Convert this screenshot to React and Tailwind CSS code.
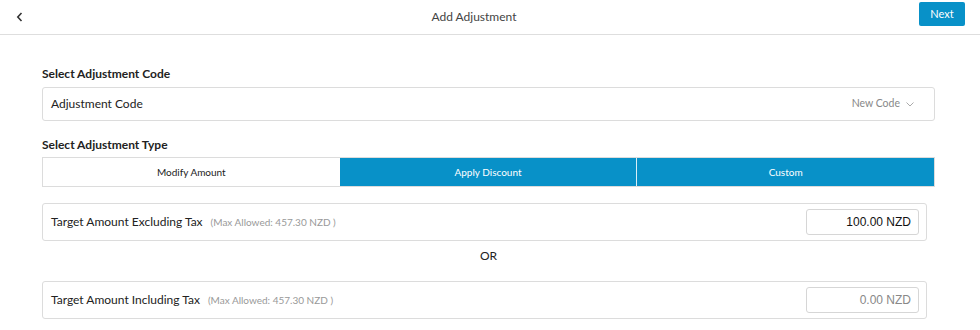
import { useState } from "react";

const font = "font-['Lato','Liberation_Sans',sans-serif]";

function AmountRow({ label, value, muted }) {
  return (
    <div className="mr-[8px] flex h-[38px] items-center justify-between rounded-[3px] border border-[#dcdcdc] pl-[8px] pr-[7px]">
      <div className="flex items-baseline">
        <span className="text-[12px] text-[#222]">{label}</span>
        <span className="ml-[8px] text-[10px] text-[#999]">(Max Allowed: 457.30 NZD )</span>
      </div>
      <div
        className={`flex h-[26px] w-[113px] items-center justify-end rounded-[3px] border border-[#d6d6d6] pr-[7px] font-['Liberation_Sans',Arial,sans-serif] text-[12px] ${
          muted ? "text-[#888]" : "text-[#111]"
        }`}
      >
        {value}
      </div>
    </div>
  );
}

export default function App() {
  const [type, setType] = useState("Apply Discount");
  const types = ["Modify Amount", "Apply Discount", "Custom"];

  return (
    <div className={`${font} h-[330px] w-[980px] overflow-hidden bg-white text-[#333]`}>
      <div className="flex h-[35px] items-center border-b border-[#dedede]">
        <div className="flex w-[40px] items-center pl-[16px]">
          <svg width="8" height="10" viewBox="0 0 8 10" fill="none">
            <path d="M5.5 1 L1.8 5 L5.5 9" stroke="#333" strokeWidth="1.6" />
          </svg>
        </div>
        <div className="flex-1 text-center text-[12px] text-[#444]">Add Adjustment</div>
        <div className="flex w-[72px] justify-end pr-[15px]">
          <button className="mt-[-6px] h-[24px] w-[46px] rounded-[2px] bg-[#0891c8] text-[11px] text-white">
            Next
          </button>
        </div>
      </div>

      <div className="pl-[42px] pr-[45px] pt-[31px]">
        <div className="mb-[5px] h-[16px] text-[12px] font-bold leading-[16px] text-[#222]">
          Select Adjustment Code
        </div>
        <div className="flex h-[34px] items-center justify-between rounded-[3px] border border-[#dcdcdc] pl-[8px] pr-[20px]">
          <span className="text-[12px] text-[#222]">Adjustment Code</span>
          <span className="flex items-center text-[10.5px] text-[#888]">
            New Code
            <svg className="ml-[6px]" width="8" height="5" viewBox="0 0 8 5" fill="none">
              <path d="M0.5 0.5 L4 4 L7.5 0.5" stroke="#aaa" strokeWidth="1" />
            </svg>
          </span>
        </div>

        <div className="mb-[4px] mt-[16px] h-[16px] text-[12px] font-bold leading-[16px] text-[#222]">
          Select Adjustment Type
        </div>
        <div className="flex h-[30px] border border-[#dcdcdc]">
          {types.map((t, i) => {
            const active = t !== "Modify Amount";
            return (
              <button
                key={t}
                onClick={() => setType(t)}
                className={`flex flex-1 items-center justify-center text-[10px] ${
                  active ? "bg-[#0891c8] text-white" : "bg-white text-[#222]"
                } ${i === 2 ? "border-l border-[#d8eef7]" : ""}`}
              >
                {t}
              </button>
            );
          })}
        </div>

        <div className="mt-[16px]">
          <AmountRow label="Target Amount Excluding Tax" value="100.00 NZD" />
        </div>
        <div className="mt-[7px] h-[16px] text-center text-[12px] leading-[16px] text-[#222]">OR</div>
        <div className="mt-[17px]">
          <AmountRow label="Target Amount Including Tax" value="0.00 NZD" muted />
        </div>
      </div>
    </div>
  );
}
